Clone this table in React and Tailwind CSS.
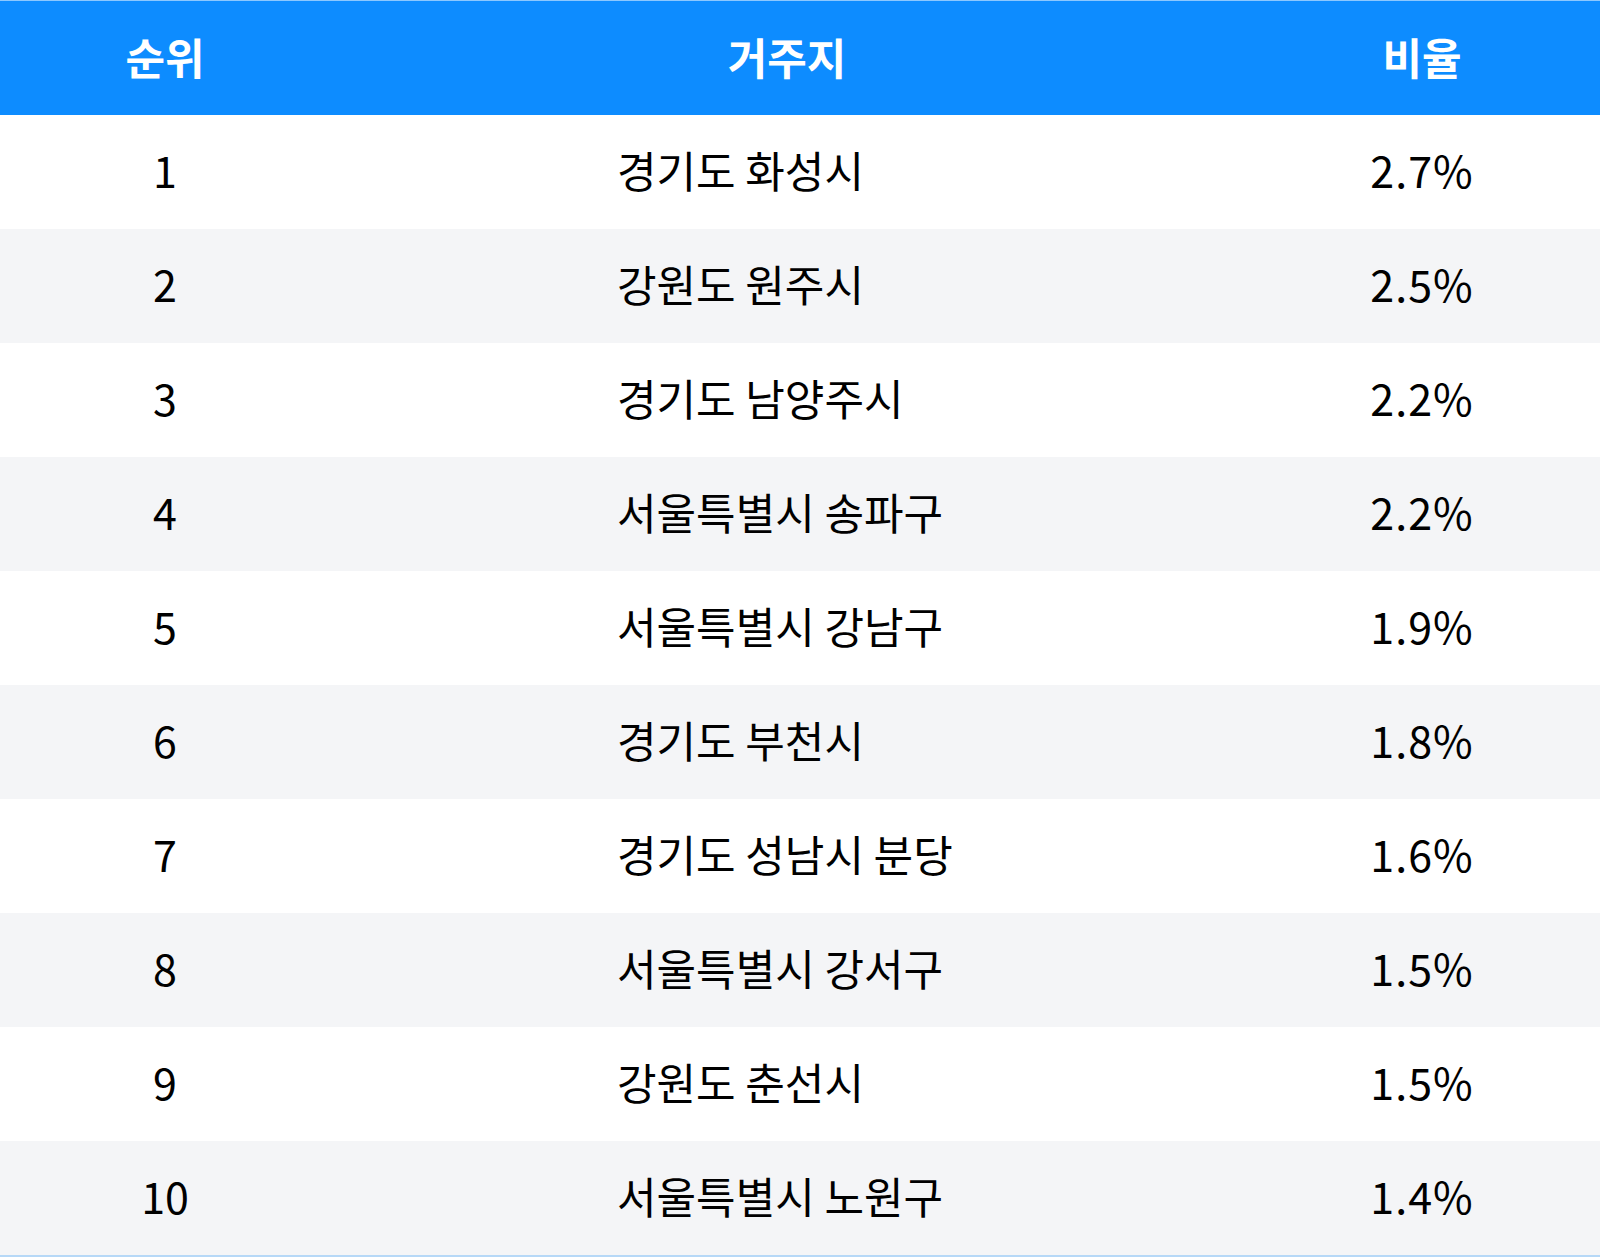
import React from 'react'

const rows = [
  { rank: 1, place: '경기도 화성시', ratio: '2.7%' },
  { rank: 2, place: '강원도 원주시', ratio: '2.5%' },
  { rank: 3, place: '경기도 남양주시', ratio: '2.2%' },
  { rank: 4, place: '서울특별시 송파구', ratio: '2.2%' },
  { rank: 5, place: '서울특별시 강남구', ratio: '1.9%' },
  { rank: 6, place: '경기도 부천시', ratio: '1.8%' },
  { rank: 7, place: '경기도 성남시 분당', ratio: '1.6%' },
  { rank: 8, place: '서울특별시 강서구', ratio: '1.5%' },
  { rank: 9, place: '강원도 춘선시', ratio: '1.5%' },
  { rank: 10, place: '서울특별시 노원구', ratio: '1.4%' },
];

export default function App() {
  return (
    <div
      className="w-[1600px] bg-white text-black"
      style={{ fontFamily: '"Noto Sans CJK KR", "Noto Sans", sans-serif' }}
    >
      {/* header */}
      <div className="flex h-[115px] items-center pb-[4px] bg-[#0d8cff] border-t border-[#8cc8ff] text-white text-[43px] font-bold">
        <div className="w-[330px] text-center">순위</div>
        <div className="w-[914px] text-center">거주지</div>
        <div className="flex-1 text-center">비율</div>
      </div>

      <div className="border-b-2 border-[#b6d8f7]">
        {rows.map((r, i) => (
          <div
            key={r.rank}
            className={`flex h-[114px] items-center pb-[5px] text-[43px] ${i % 2 === 1 ? 'bg-[#f4f5f7]' : 'bg-white'}`}
          >
            <div className="w-[330px] text-center">{r.rank}</div>
            <div className="w-[914px] pl-[287px]">{r.place}</div>
            <div className="flex-1 text-center tracking-[1px]">{r.ratio}</div>
          </div>
        ))}
      </div>
    </div>
  )
}
